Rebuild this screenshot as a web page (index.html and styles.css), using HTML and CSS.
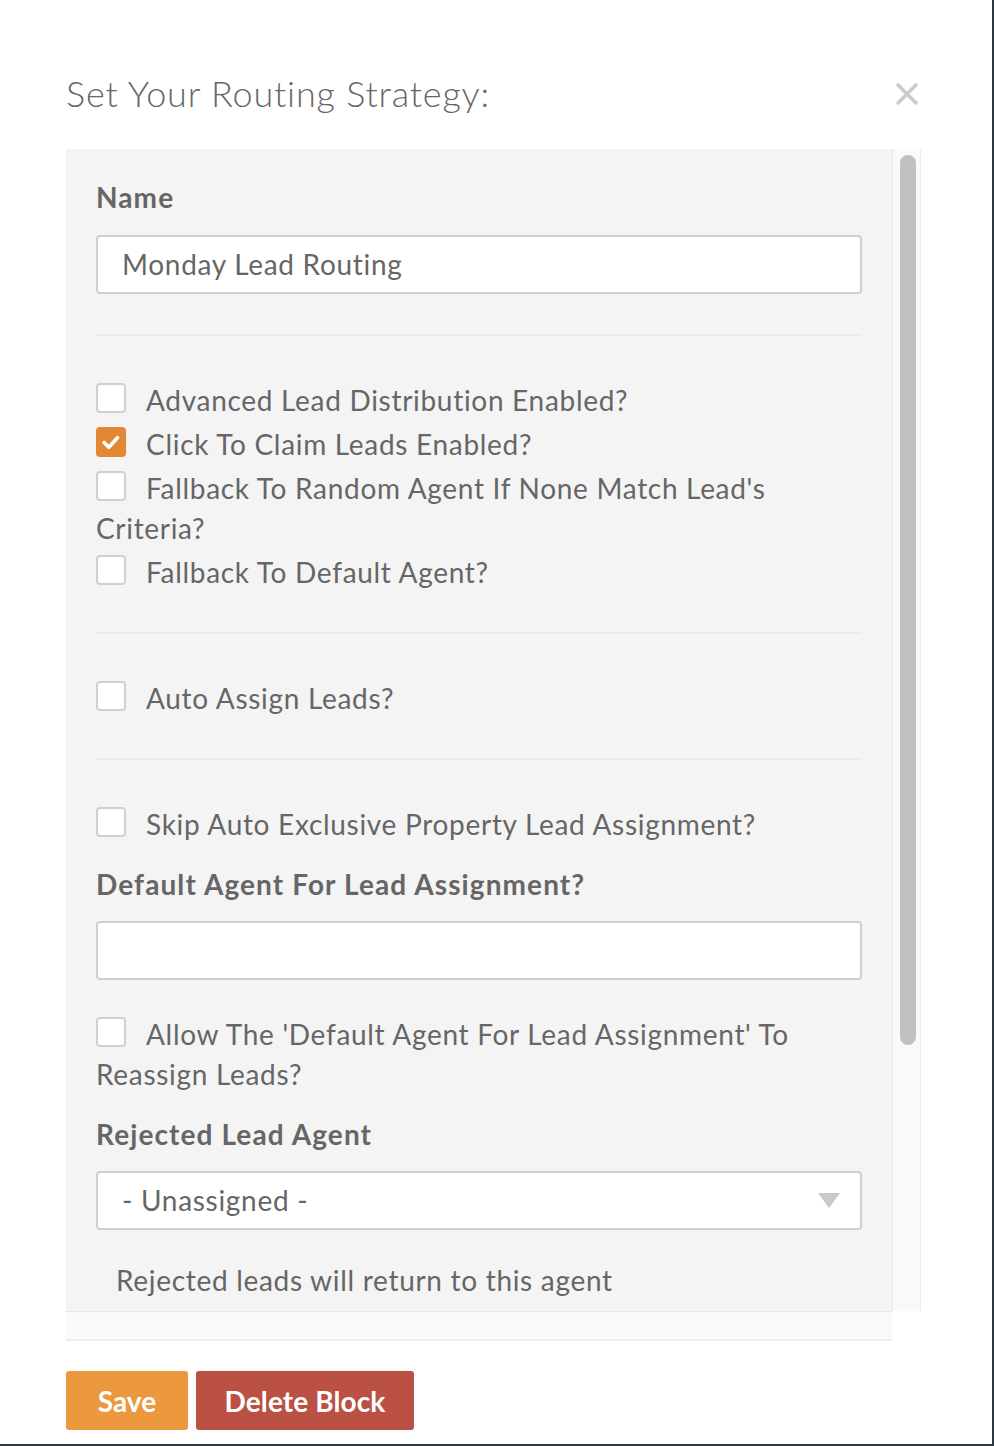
FILE: index.html
```html
<!DOCTYPE html>
<html>
<head>
<meta charset="utf-8">
<link rel="stylesheet" href="styles.css">
</head>
<body>
<div class="modal">
  <div class="modal-header">
    <h1 class="modal-title">Set Your Routing Strategy:</h1>
    <svg class="close" viewBox="0 0 24 24" width="24" height="24"><path d="M2 2 L22 22 M22 2 L2 22" stroke="#cbcbcb" stroke-width="3.6" fill="none"/></svg>
  </div>
  <div class="scroll-box">
    <div class="scroll-content">
      <div class="field-label">Name</div>
      <div class="text-input">Monday Lead Routing</div>
      <div class="divider"></div>
      <div class="check-row"><span class="box"></span>Advanced Lead Distribution Enabled?</div>
      <div class="check-row"><span class="box checked"><svg viewBox="0 0 30 30" width="26" height="26"><path d="M7 15.5 L12.5 21 L22.5 10" stroke="#fff" stroke-width="4.2" fill="none" stroke-linecap="round" stroke-linejoin="round"/></svg></span>Click To Claim Leads Enabled?</div>
      <div class="check-row"><span class="box"></span>Fallback To Random Agent If None Match Lead's Criteria?</div>
      <div class="check-row"><span class="box"></span>Fallback To Default Agent?</div>
      <div class="divider"></div>
      <div class="check-row"><span class="box"></span>Auto Assign Leads?</div>
      <div class="divider"></div>
      <div class="check-row"><span class="box"></span>Skip Auto Exclusive Property Lead Assignment?</div>
      <div class="field-label spaced">Default Agent For Lead Assignment?</div>
      <div class="text-input"></div>
      <div class="check-row allow"><span class="box"></span>Allow The 'Default Agent For Lead Assignment' To Reassign Leads?</div>
      <div class="field-label spaced">Rejected Lead Agent</div>
      <div class="text-input select">- Unassigned -<span class="caret"></span></div>
      <div class="help">Rejected leads will return to this agent</div>
    </div>
    <div class="scroll-track"><div class="thumb"></div></div>
  </div>
  <div class="bottom-strip"></div>
  <div class="actions">
    <button class="btn btn-save">Save</button>
    <button class="btn btn-delete">Delete Block</button>
  </div>
</div>
</body>
</html>
```
FILE: styles.css
```css
html, body {
  margin: 0;
  padding: 0;
}
body {
  background: #2e3843;
  width: 994px;
  height: 1446px;
  overflow: hidden;
  font-family: "Lato", "Liberation Sans", sans-serif;
  color: #666;
}
.modal {
  width: 992px;
  height: 1444px;
  background: #fff;
  box-sizing: border-box;
  padding: 0 0 0 66px;
}
.modal-header {
  display: flex;
  align-items: center;
  justify-content: space-between;
  width: 855px;
  height: 149px;
  box-sizing: border-box;
  padding-top: 36px;
}
.modal-title {
  margin: 0;
  font-size: 36px;
  font-weight: 300;
  color: #666;
  letter-spacing: 0.8px;
}
.close {
  margin-right: 2px;
  margin-top: 2px;
}
.scroll-box {
  display: flex;
  width: 855px;
  height: 1162px;
  overflow: hidden;
}
.scroll-content {
  width: 826px;
  flex: none;
  box-sizing: border-box;
  background: #f4f4f4;
  padding: 28px 30px 0 30px;
  font-size: 28px;
  line-height: 40px;
  letter-spacing: 0.7px;
}
.scroll-track {
  flex: none;
  width: 27px;
  background: #f9f9f9;
  border-left: 1px solid #e8e8e8;
  border-right: 1px solid #ececec;
  position: relative;
}
.thumb {
  position: absolute;
  left: 7px;
  top: 6px;
  width: 16px;
  height: 890px;
  border-radius: 8px;
  background: #c1c1c1;
}
.field-label {
  font-weight: 700;
  letter-spacing: 1.1px;
  margin-bottom: 18px;
}
.field-label.spaced {
  margin-top: 20px;
  margin-bottom: 17px;
}
.text-input {
  height: 59px;
  box-sizing: border-box;
  border: 2px solid #cfcfcf;
  border-radius: 4px;
  background: #fff;
  padding-left: 24px;
  line-height: 54px;
}
.select {
  position: relative;
}
.caret {
  position: absolute;
  right: 20px;
  top: 20px;
  width: 0;
  height: 0;
  border-left: 11px solid transparent;
  border-right: 11px solid transparent;
  border-top: 15px solid #c9c9c9;
}
.divider {
  height: 2px;
  background: #ebebeb;
  margin: 40px 0 44px;
}
.check-row {
  margin-bottom: 4px;
}
.check-row + .divider {
  margin-top: 40px;
}
.box {
  float: left;
  width: 30px;
  height: 30px;
  box-sizing: border-box;
  border: 2px solid #d0d0d0;
  border-radius: 4px;
  background: #fff;
  margin: 3px 20px 0 0;
  display: flex;
  align-items: center;
  justify-content: center;
}
.box.checked {
  background: #e28733;
  border-color: #e28733;
}
.check-row.allow {
  margin-top: 34px;
}
.help {
  margin-top: 30px;
  padding-left: 20px;
}
.bottom-strip {
  width: 826px;
  height: 27px;
  background: #f9f9f9;
  border-top: 1px solid #e6e6e6;
  border-bottom: 2px solid #ededed;
}
.actions {
  display: flex;
  gap: 8px;
  margin-top: 30px;
}
.btn {
  height: 59px;
  border: none;
  border-radius: 3px;
  color: #fff;
  font-family: "Lato", "Liberation Sans", sans-serif;
  font-size: 28px;
  font-weight: 700;
  padding: 0;
  white-space: nowrap;
  letter-spacing: 0.1px;
}
.btn-save {
  background: #eb983f;
  width: 122px;
}
.btn-delete {
  background: #bb5044;
  width: 218px;
}
```
